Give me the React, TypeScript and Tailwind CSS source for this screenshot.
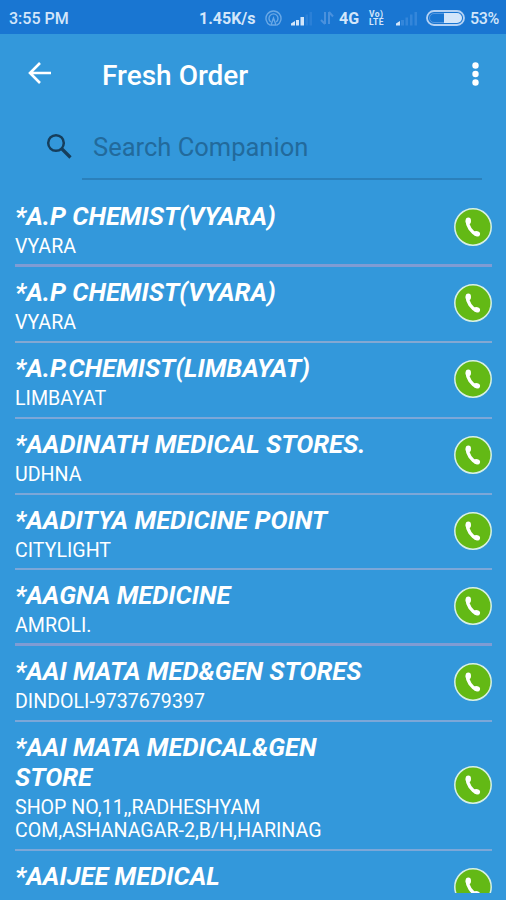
import React from "react";

type Companion = {
  name: string[];
  address: string[];
  divider: string;
};

const companions: Companion[] = [
  { name: ["*A.P CHEMIST(VYARA)"], address: ["VYARA"], divider: "h-[3px] bg-[#7f9cd4]" },
  { name: ["*A.P CHEMIST(VYARA)"], address: ["VYARA"], divider: "h-[2px] bg-[#84a8d2]" },
  { name: ["*A.P.CHEMIST(LIMBAYAT)"], address: ["LIMBAYAT"], divider: "h-[2px] bg-[#7ca7d8]" },
  { name: ["*AADINATH MEDICAL STORES."], address: ["UDHNA"], divider: "h-[2px] bg-[#7ca7d8]" },
  { name: ["*AADITYA MEDICINE POINT"], address: ["CITYLIGHT"], divider: "h-[2px] bg-[#7ca7d8]" },
  { name: ["*AAGNA MEDICINE"], address: ["AMROLI."], divider: "h-[3px] bg-[#7f9cd4]" },
  { name: ["*AAI MATA MED&GEN STORES"], address: ["DINDOLI-9737679397"], divider: "h-[2px] bg-[#7ca7d8]" },
  {
    name: ["*AAI MATA MEDICAL&GEN", "STORE"],
    address: ["SHOP NO,11,,RADHESHYAM", "COM,ASHANAGAR-2,B/H,HARINAG"],
    divider: "h-[2px] bg-[#7ca7d8]",
  },
  { name: ["*AAIJEE MEDICAL"], address: [], divider: "h-[2px] bg-[#7ca7d8]" },
];

const StatusBar = () => (
  <div className="flex h-[34px] shrink-0 items-center bg-[#1976d2] pt-[2px] pl-[9px] text-[16px] font-medium text-[#d3e6fa]">
    <span className="w-[190px] pt-px whitespace-nowrap">3:55 PM</span>
    <span className="w-[66px] pt-px whitespace-nowrap font-bold">1.45K/s</span>
    {/* Hotspot */}
    <svg className="mr-[9px] shrink-0" width="17" height="17" viewBox="0 0 17 17" fill="none" stroke="#69a8e6" strokeWidth="1.4">
      <path d="M5.2 15.2A7.5 7.5 0 1 1 11.8 15.2" />
      <path d="M5.8 12A4.5 4.5 0 1 1 11.2 12" />
      <path d="M8.5 8L6 15H11Z" />
    </svg>
    {/* Signal */}
    <svg className="mr-[7px] shrink-0" width="22" height="16" viewBox="0 0 22 16">
      <path d="M0 15.500V13.500L4 11V15.500Z M5 15.500V10H8V15.500Z M9.500 15.500V7H13V15.500Z" fill="#d3e6fa" />
      <path d="M14.500 4.500H17V15.500H14.500Z M18.500 2H21V15.500H18.500Z" fill="#2b80d7" />
    </svg>
    {/* Data arrows */}
    <svg className="mr-[5px] shrink-0" width="14" height="16" viewBox="0 0 14 16" fill="none" stroke="#4a91dd" strokeWidth="2">
      <path d="M5 2V14M1 10L5 14" />
      <path d="M9 14V2M9 2L13 6.500" />
    </svg>
    <span className="w-[30px] pt-px whitespace-nowrap font-bold">4G</span>
    <span className="w-[27px] text-[8.500px] leading-[8px] font-bold tracking-[0.400px]">
      <span className="block h-[8px]">Vo)</span>
      <span className="block h-[8px]">LTE</span>
    </span>
    <svg className="mr-[8px] shrink-0" width="22" height="16" viewBox="0 0 22 16">
      <path d="M0 15.500V13.500L4 11V15.500Z" fill="#d3e6fa" />
      <path d="M5 10H8V15.500H5Z M9.500 7.500H12V15.500H9.500Z M14 4.500H16.500V15.500H14Z M18.500 2H21V15.500H18.500Z" fill="#3486da" />
    </svg>
    {/* Battery */}
    <svg className="mr-[5px] shrink-0" width="39" height="16" viewBox="0 0 39 16">
      <rect x="1" y="1" width="37" height="14" rx="7" fill="none" stroke="#b4d2f4" strokeWidth="1.800" />
      <path d="M18 3H31A5 5 0 0 1 31 13H18Z" fill="#d3e6fa" />
      <path d="M18 3.500H8A4.500 4.500 0 0 0 8 12.500H18" fill="none" stroke="#5598e0" />
    </svg>
    <span className="pt-px tracking-[-0.300px] whitespace-nowrap">53%</span>
  </div>
);

const CallButton = () => (
  <button className="-mt-[5px] shrink-0" aria-label="Call">
    <svg width="38" height="38" viewBox="0 0 38 38">
      <circle cx="19" cy="19" r="18.200" fill="#63b915" stroke="#d8f0e4" strokeWidth="1.500" />
      <path d="M13.300 13C13.300 18 17.500 24.500 22.500 26.300" fill="none" stroke="#fff" strokeWidth="3.400" strokeLinecap="round" />
      <ellipse cx="14.300" cy="12.900" rx="2.700" ry="3.300" fill="#fff" />
      <ellipse cx="22.800" cy="25.800" rx="3.300" ry="2.600" fill="#fff" transform="rotate(15 22.800 25.800)" />
    </svg>
  </button>
);

const App: React.FC = () => {
  return (
    <div className="flex h-[900px] w-[506px] flex-col overflow-hidden bg-[#3398db] font-[Roboto,sans-serif] text-white">
      <StatusBar />

      {/* Toolbar */}
      <div className="flex h-[80px] shrink-0 items-center pr-[24px] pl-[27px]">
        <svg className="-mt-[2px]" width="25" height="24" viewBox="0 0 25 24" fill="none" stroke="#fff" strokeWidth="2.600">
          <path d="M24 12H3M13 2L3 12L13 22" />
        </svg>
        <h1 className="mt-[3px] ml-[50px] flex-1 text-[28px] font-medium">Fresh Order</h1>
        <svg width="13" height="26" viewBox="0 0 13 26" fill="#fff">
          <circle cx="6.500" cy="4.500" r="3.200" />
          <circle cx="6.500" cy="13" r="3.200" />
          <circle cx="6.500" cy="21.500" r="3.200" />
        </svg>
      </div>

      {/* Search */}
      <div className="flex h-[77px] shrink-0 pr-[24px] pl-[46px]">
        <svg className="mt-[19px] shrink-0" width="27" height="27" viewBox="0 0 27 27" fill="none" stroke="#163e5c" strokeWidth="2.500">
          <circle cx="10" cy="10" r="7.800" />
          <path d="M15.500 15.500L24.500 24.500" strokeWidth="3.200" />
        </svg>
        <div className="ml-[9px] h-[66px] flex-1 border-b-2 border-[#2b80bb] pt-[14px] pl-[11px] text-[25.500px] leading-[38px] text-[#226a9c]">
          Search Companion
        </div>
      </div>

      {/* Companions */}
      <div className="h-[702px] overflow-hidden pr-[14px] pl-[15px]">
        {companions.map((companion, index) => (
          <div key={index}>
            <div className="flex items-center justify-between pt-[10px] pb-[5.900px]">
              <div>
                <div className="text-[25.500px] leading-[30px] font-bold italic">
                  {companion.name.map((line) => (
                    <p key={line} className="whitespace-nowrap">{line}</p>
                  ))}
                </div>
                <div className="mt-[4px] min-h-[23px] text-[19.600px] leading-[23px]">
                  {companion.address.map((line) => (
                    <p key={line} className="whitespace-nowrap">{line}</p>
                  ))}
                </div>
              </div>
              <CallButton />
            </div>
            <div className="flex h-[3px] items-end">
              <div className={`w-full ${companion.divider}`} />
            </div>
          </div>
        ))}
      </div>
    </div>
  );
};

export default App;
